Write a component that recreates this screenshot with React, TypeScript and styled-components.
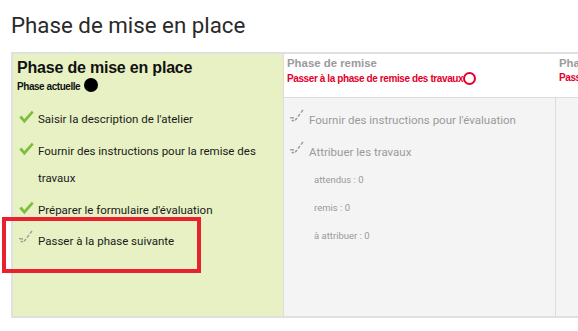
import React from "react";
import styled, { createGlobalStyle } from "styled-components";

const Global = createGlobalStyle`
  html, body { margin: 0; padding: 0; background: #fff; overflow: hidden; }
  body { width: 578px; height: 331px; font-family: Roboto, "Liberation Sans", Arial, sans-serif; }
`;

const Page = styled.div`
  position: relative;
  padding: 0 0 0 11px;
  width: 578px;
  height: 331px;
  box-sizing: border-box;
  overflow: hidden;
`;

const Title = styled.h2`
  margin: 0;
  padding-top: 10px;
  height: 52px;
  box-sizing: border-box;
  font-family: Roboto, sans-serif;
  font-weight: 400;
  font-size: 22.3px;
  line-height: 30px;
  color: #2a2a2a;
`;

const Table = styled.div`
  display: flex;
  width: 700px;
  height: 266px;
  box-sizing: border-box;
  border: 2px solid #e0e0e0;
  border-right: none;
`;

const Column = styled.div<{ $w: number; $current?: boolean }>`
  flex: 0 0 ${(p) => p.$w}px;
  box-sizing: border-box;
  display: flex;
  flex-direction: column;
  background: ${(p) => (p.$current ? "#e7f1c4" : "#f4f4f4")};
  border-right: 1px solid #dcdcdc;
`;

const Header = styled.div<{ $current?: boolean }>`
  height: 44px;
  box-sizing: border-box;
  padding: ${(p) => (p.$current ? "4px 4px 0" : "2px 3px 0")};
  background: ${(p) => (p.$current ? "transparent" : "#fff")};
  border-bottom: ${(p) => (p.$current ? "none" : "1px solid #dcdcdc")};
  margin-right: ${(p) => (p.$current ? "0" : "-1px")};
  font-family: "Liberation Sans", Arial, sans-serif;
`;

const PhaseName = styled.div<{ $current?: boolean }>`
  font-weight: bold;
  font-size: ${(p) => (p.$current ? "16px" : "11.4px")};
  line-height: ${(p) => (p.$current ? "20px" : "15px")};
  color: ${(p) => (p.$current ? "#111" : "#9b9b9b")};
  white-space: nowrap;
  letter-spacing: ${(p) => (p.$current ? "-0.2px" : "0")};
`;

const PhaseSub = styled.div<{ $current?: boolean }>`
  display: flex;
  align-items: flex-end;
  gap: ${(p) => (p.$current ? "4px" : "0")};
  margin-top: ${(p) => (p.$current ? "0" : "1px")};
  font-weight: bold;
  font-size: 10px;
  line-height: 12px;
  letter-spacing: ${(p) => (p.$current ? "-0.45px" : "-0.4px")};
  color: ${(p) => (p.$current ? "#111" : "#e4002b")};
  white-space: nowrap;
`;

const Dot = styled.span<{ $filled?: boolean }>`
  flex: 0 0 auto;
  display: inline-block;
  box-sizing: border-box;
  width: ${(p) => (p.$filled ? 14 : 13)}px;
  height: ${(p) => (p.$filled ? 14 : 13)}px;
  border-radius: 50%;
  background: ${(p) => (p.$filled ? "#000" : "transparent")};
  border: ${(p) => (p.$filled ? "none" : "2px solid #e4002b")};
  margin-bottom: ${(p) => (p.$filled ? "1px" : "0")};
`;

const Body = styled.ul<{ $current?: boolean }>`
  list-style: none;
  margin: 0;
  padding: ${(p) => (p.$current ? "8px 10px 0 4px" : "9px 8px 0 4px")};
  flex: 1;
`;

const Task = styled.li<{ $muted?: boolean }>`
  display: flex;
  align-items: flex-start;
  margin-bottom: 4px;
  font-family: Roboto, sans-serif;
  font-size: 11.5px;
  line-height: 27.5px;
  color: ${(p) => (p.$muted ? "#9a9a9a" : "#1a1a1a")};
`;

const IconBox = styled.span<{ $todo?: boolean }>`
  flex: 0 0 21px;
  height: 27px;
  display: flex;
  align-items: flex-start;
  padding-top: ${(p) => (p.$todo ? "2px" : "4px")};
  padding-left: ${(p) => (p.$todo ? "1px" : "2px")};
  box-sizing: border-box;
`;

const InfoList = styled.ul`
  list-style: none;
  margin: -4px 0 0 26px;
  padding: 0;
`;

const Info = styled.li`
  font-family: Roboto, sans-serif;
  font-size: 9.5px;
  line-height: 28px;
  color: #9a9a9a;
`;

const Overlay = styled.div`
  position: absolute;
  left: 2px;
  top: 217px;
  width: 199px;
  height: 56px;
  box-sizing: border-box;
  border: 4px solid #e8212e;
`;

const DoneCheck = () => (
  <svg width="15" height="14" viewBox="0 0 15 14">
    <path d="M0.3 7.6 L2.6 5.6 L5.3 9.1 L12.8 0.8 L14.7 2.5 L5.4 13.2 Z" fill="#7dbf3c" />
  </svg>
);

const TodoCheck = () => (
  <svg width="16" height="14" viewBox="0 0 16 14">
    <g stroke="#9c9c9c" strokeWidth="1.4" strokeLinecap="butt" fill="none">
      <path d="M14 1 L12 3.6" />
      <path d="M11 5 L9 7.6" />
      <path d="M8 9 L6.2 11.3" />
      <path d="M1 8.6 L5 9" />
      <path d="M2.6 11.6 L5.2 11.6" />
    </g>
  </svg>
);

export default function App() {
  return (
    <>
      <Global />
      <Page>
        <Title>Phase de mise en place</Title>
        <Table>
          <Column $w={271} $current>
            <Header $current>
              <PhaseName $current>Phase de mise en place</PhaseName>
              <PhaseSub $current>
                <span>Phase actuelle</span>
                <Dot $filled />
              </PhaseSub>
            </Header>
            <Body $current>
              <Task>
                <IconBox><DoneCheck /></IconBox>
                <span>Saisir la description de l'atelier</span>
              </Task>
              <Task>
                <IconBox><DoneCheck /></IconBox>
                <span>Fournir des instructions pour la remise des travaux</span>
              </Task>
              <Task>
                <IconBox><DoneCheck /></IconBox>
                <span>Préparer le formulaire d'évaluation</span>
              </Task>
              <Task>
                <IconBox $todo><TodoCheck /></IconBox>
                <span>Passer à la phase suivante</span>
              </Task>
            </Body>
          </Column>
          <Column $w={272}>
            <Header>
              <PhaseName>Phase de remise</PhaseName>
              <PhaseSub>
                <span>Passer à la phase de remise des travaux</span>
                <Dot />
              </PhaseSub>
            </Header>
            <Body>
              <Task $muted>
                <IconBox $todo><TodoCheck /></IconBox>
                <span>Fournir des instructions pour l'évaluation</span>
              </Task>
              <Task $muted>
                <IconBox $todo><TodoCheck /></IconBox>
                <span>Attribuer les travaux</span>
              </Task>
              <InfoList>
                <Info>attendus : 0</Info>
                <Info>remis : 0</Info>
                <Info>à attribuer : 0</Info>
              </InfoList>
            </Body>
          </Column>
          <Column $w={272}>
            <Header>
              <PhaseName>Phase d'évaluation</PhaseName>
              <PhaseSub>
                <span>Passer à la phase d'évaluation</span>
              </PhaseSub>
            </Header>
            <Body />
          </Column>
        </Table>
        <Overlay />
      </Page>
    </>
  );
}
